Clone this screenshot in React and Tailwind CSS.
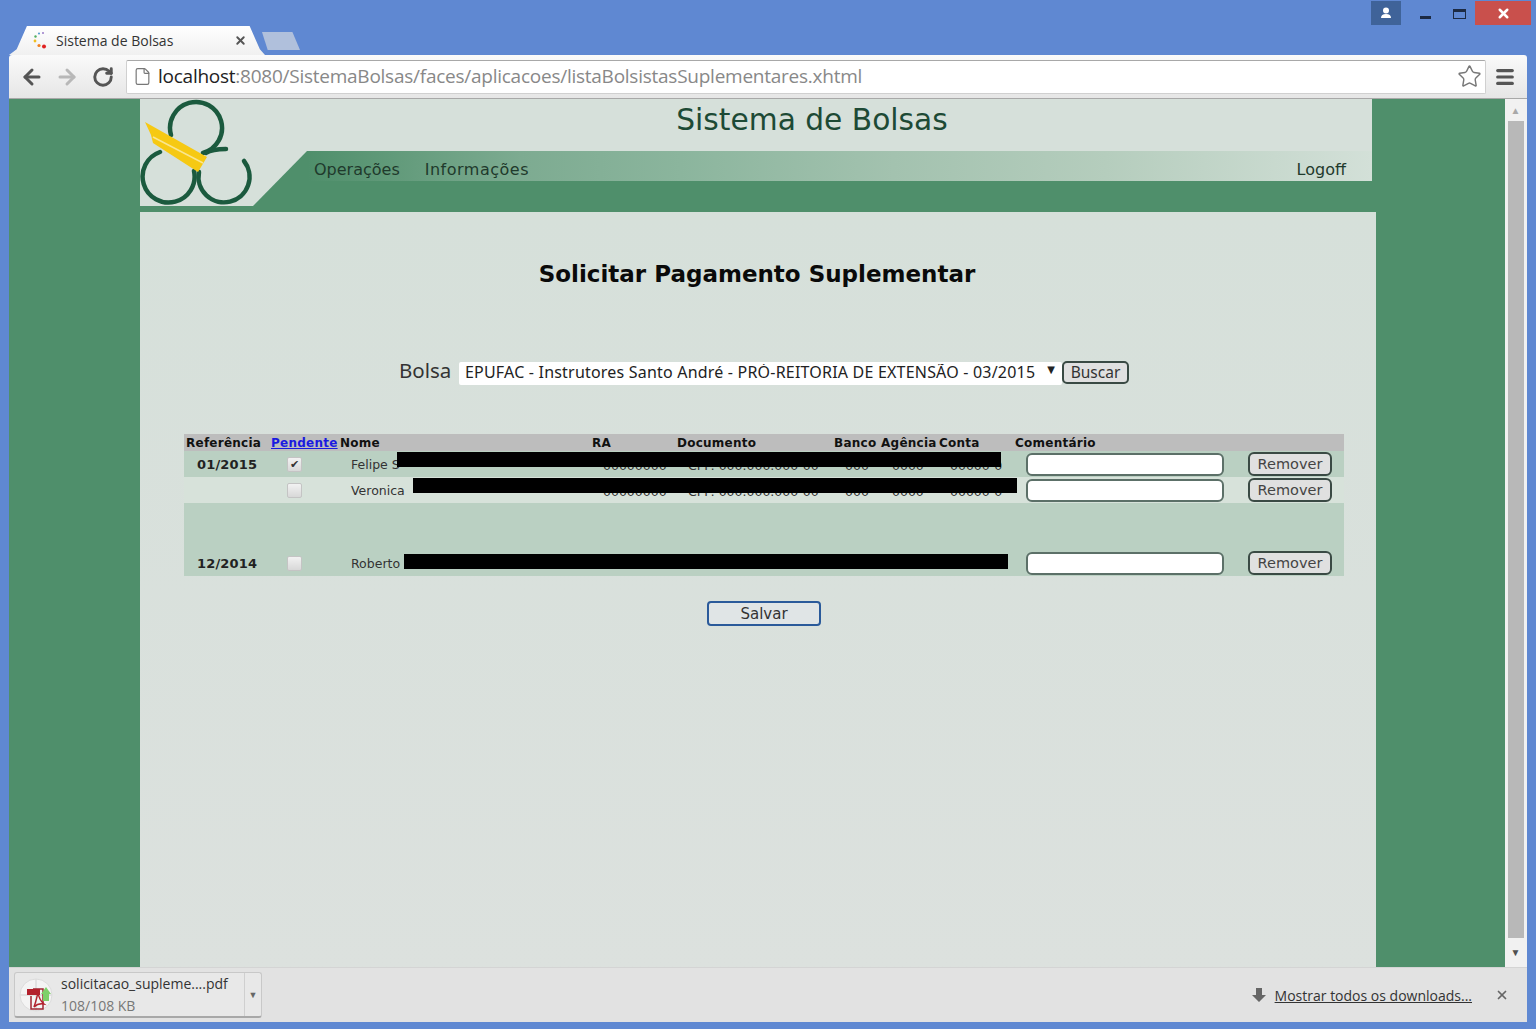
import React from "react";
import { ArrowLeft, ArrowRight, RotateCw, File, Star, Menu, X } from "lucide-react";

const rows = [
	{ ref: "01/2015", name: "Felipe S", checked: true, bg: "bg-[#bad0c2]", h: "h-[26px]" },
	{ ref: "", name: "Veronica", checked: false, bg: "bg-[#d7e2da]", h: "h-[26px]" },
	{ ref: "12/2014", name: "Roberto", checked: false, bg: "bg-[#bad0c2]", h: "h-[73px]" },
];

const Logo = () => (
	<svg width="168" height="107" viewBox="0 0 168 107" className="block">
		<polygon points="167,52 168,52 168,107 113,107" fill="#4f8f6b" />
		<g fill="none" stroke="#1b5a3e" strokeWidth="4.5" strokeLinecap="round">
			<path d="M31 36 A 26 26 0 1 1 63 54" />
			<path d="M66 54 Q 72 50 86 50" />
			<path d="M20 53 A 26 26 0 1 0 54 72" />
			<path d="M104 62 A 25.5 25.5 0 1 1 59 73" />
		</g>
		<polygon points="5,23 67,58 58,73 13,44 11,36" fill="#f6c913" />
		<line x1="13" y1="38" x2="63" y2="64" stroke="#f9e690" strokeWidth="1.5" />
	</svg>
);

const PdfIcon = () => (
	<svg width="34" height="34" viewBox="0 0 34 34">
		<circle cx="17" cy="17" r="16" fill="#f4f4f4" stroke="#dcdcdc" />
		<path d="M17 1v32M1 17h32" stroke="#dcdcdc" strokeWidth="1.5" />
		<path d="M14 11h10v20H12V18" fill="none" stroke="#a02430" strokeWidth="1.5" />
		<rect x="8" y="11" width="13" height="6" fill="#b3202c" />
		<path d="M15 29q3-9 4-15q1 8 6 12q-6-1-10 3z" fill="none" stroke="#b3202c" strokeWidth="1.5" />
		<path d="M27 9l5 7h-2v7h-6v-7h-2z" fill="#7ed06a" />
	</svg>
);

const App = () => {
	return (
		<div className="w-[1536px] h-[1029px] flex flex-col overflow-hidden bg-[#5f88d2] px-[9px] pb-[7px] font-['Open_Sans',sans-serif]">
			{/* Tab strip */}
			<div className="h-[55px] shrink-0 relative flex items-end">
				<div className="w-[256px] h-[29px] bg-gradient-to-b from-white to-[#f0f0f0] [clip-path:polygon(0_100%,3%_80%,7%_0,94%_0,98%_80%,100%_100%)] flex items-center pl-[24px] pb-[1px]">
					<svg width="16" height="18" viewBox="0 0 16 18" className="shrink-0">
						<circle cx="10" cy="2" r="1" fill="#9a7bc8" />
						<circle cx="6" cy="2.5" r="1.1" fill="#5aa0d0" />
						<circle cx="2.5" cy="5.5" r="1.2" fill="#50b060" />
						<circle cx="2" cy="10" r="1.4" fill="#f0c020" />
						<circle cx="6" cy="14.5" r="1.6" fill="#f08020" />
						<circle cx="11" cy="15.5" r="2" fill="#e02020" />
					</svg>
					<span className="ml-[7px] text-[14px] text-[#333] w-[178px] whitespace-nowrap">Sistema de Bolsas</span>
					<X size={13} strokeWidth={3.5} className="text-[#555]" />
				</div>
				<div className="w-[38px] h-[18px] mb-[5px] ml-[-3px] bg-[#b0c0dc] [clip-path:polygon(0_0,80%_0,100%_100%,15%_100%)]"></div>

				{/* Window controls */}
				<div className="absolute right-[-4px] top-[1px] h-[24px] flex items-start text-white">
					<div className="w-[30px] h-[24px] bg-[#3f6399] flex items-center justify-center">
						<svg width="12" height="12" viewBox="0 0 12 12" fill="white">
							<circle cx="6" cy="3.5" r="3" />
							<path d="M1 11q0-4 5-4t5 4z" />
						</svg>
					</div>
					<div className="w-[19px]"></div>
					<div className="w-[11px] h-[3px] mt-[15px] bg-[#1c2a44]"></div>
					<div className="w-[22px]"></div>
					<div className="w-[13px] h-[10px] mt-[8px] border border-[#1c2a44] border-t-[3px]"></div>
					<div className="w-[9px]"></div>
					<div className="w-[56px] h-[24px] bg-[#c9504c] flex items-center justify-center">
						<X size={15} strokeWidth={4} />
					</div>
				</div>
			</div>

			{/* Toolbar */}
			<div className="h-[44px] shrink-0 rounded-t-[3px] bg-gradient-to-b from-[#fafafa] to-[#e6e6e6] border-b border-[#a8a8a8] flex items-center">
				<ArrowLeft size={24} strokeWidth={3} className="ml-[11px] text-[#555]" />
				<ArrowRight size={24} strokeWidth={3} className="ml-[11px] text-[#b8b8b8]" />
				<RotateCw size={22} strokeWidth={3.2} className="ml-[13px] text-[#555]" />
				<div className="ml-[12px] w-[1360px] h-[34px] bg-white rounded-[2px] border border-[#d0d0d0] border-t-[#a8a8a8] flex items-center pl-[6px] pr-[3px]">
					<File size={19} strokeWidth={1.5} className="text-[#777] shrink-0" />
					<span className="ml-[6px] text-[19px] tracking-[-0.25px] text-[#222] whitespace-nowrap">
						localhost<span className="text-[#888]">:8080/SistemaBolsas/faces/aplicacoes/listaBolsistasSuplementares.xhtml</span>
					</span>
					<Star size={25} strokeWidth={1.4} className="ml-auto text-[#777]" />
				</div>
				<Menu size={22} strokeWidth={3.4} className="ml-[8px] text-[#555]" />
			</div>

			{/* Viewport */}
			<div className="flex-1 flex min-h-0">
				<div className="flex-1 bg-[#4f8f6b] pl-[131px] flex flex-col min-w-0">
					{/* Site header */}
					<div className="w-[1232px] h-[113px] shrink-0 flex items-start font-['DejaVu_Sans',sans-serif]">
						<div className="w-[168px] h-[107px] bg-[#d6e0da]">
							<Logo />
						</div>
						<div className="flex-1 h-[82px] bg-[#d6e0da] flex flex-col">
							<h1 className="h-[52px] pr-[56px] text-center text-[29.7px] leading-[41px] text-[#1d4a35]">Sistema de Bolsas</h1>
							<div className="h-[30px] flex items-center pt-[8px] pl-[6px] pr-[26px] text-[16px] text-[#1f3a2c] bg-[linear-gradient(90deg,#4f8f6b_0%,#7dab91_20%,#8bb59d_35%,#a3c2af_55%,#b5cdbd_75%,#d3e0d8_100%)]">
								<span>Operações</span>
								<span className="ml-[25px] tracking-[0.5px]">Informações</span>
								<span className="ml-auto">Logoff</span>
							</div>
						</div>
					</div>

					{/* Main panel */}
					<div className="w-[1236px] flex-1 bg-gradient-to-b from-[#d6e0da] to-[#dce1de] flex flex-col font-['DejaVu_Sans',sans-serif]">
						<h2 className="pt-[46px] pr-[2px] text-center text-[23px] leading-[32px] font-bold text-[#0a0a0a]">Solicitar Pagamento Suplementar</h2>

						<div className="mt-[71px] ml-[259px] flex items-center h-[23px]">
							<span className="w-[60px] text-[20.5px] text-[#333] font-['Noto_Sans',sans-serif] leading-none mb-[5px]">Bolsa</span>
							<div className="relative w-[603px] h-[23px]">
								<select className="appearance-none w-full h-full bg-white pl-[6px] pb-[2px] text-[16px] leading-none tracking-[0.2px] text-[#222] font-['Noto_Sans',sans-serif] rounded-[2px] outline-none">
									<option>EPUFAC - Instrutores Santo André - PRÓ-REITORIA DE EXTENSÃO - 03/2015</option>
								</select>
								<span className="absolute right-[7px] top-[1px] text-[10px] text-[#222]">▼</span>
							</div>
							<button className="w-[67px] h-[23px] bg-[#e0e0e0] border-2 border-[#3a4a44] rounded-[5px] text-[15.5px] leading-none text-[#333] font-['Noto_Sans',sans-serif]">Buscar</button>
						</div>

						<div className="relative mt-[50px] ml-[44px] w-[1160px]">
							<table className="table-fixed w-[1160px] border-collapse text-[12.5px] leading-[14px] text-[#333]">
								<colgroup>
									<col className="w-[85px]" />
									<col className="w-[69px]" />
									<col className="w-[252px]" />
									<col className="w-[85px]" />
									<col className="w-[157px]" />
									<col className="w-[48px]" />
									<col className="w-[58px]" />
									<col className="w-[75px]" />
									<col className="w-[222px]" />
									<col className="w-[109px]" />
								</colgroup>
								<thead>
									<tr className="h-[17px] bg-[#bdbdbd] text-left text-[12px] tracking-[0.25px] text-[#111] font-bold">
										<th className="pl-[2px] font-bold">Referência</th>
										<th className="pl-[2px] font-bold"><a href="#pendente" className="text-[#1a1ae0] underline">Pendente</a></th>
										<th className="pl-[2px] font-bold">Nome</th>
										<th className="pl-[2px] font-bold">RA</th>
										<th className="pl-[2px] font-bold">Documento</th>
										<th className="pl-[2px] font-bold">Banco</th>
										<th className="pl-[1px] font-bold">Agência</th>
										<th className="pl-[1px] font-bold">Conta</th>
										<th className="pl-[2px] font-bold">Comentário</th>
										<th></th>
									</tr>
								</thead>
								<tbody>
									{rows.map((r, i) => (
										<tr key={i} className={`${r.bg} ${r.h}`}>
											<td className="pl-[13px] align-bottom pb-[5px] font-bold text-[13px] tracking-[0.15px] text-[#222]">{r.ref}</td>
											<td className="pl-[18px] align-bottom pb-[5px]">
												<span className="w-[15px] h-[15px] rounded-[2px] border border-[#c4c4c4] bg-gradient-to-b from-[#f2f2f2] to-[#d8d8d8] flex items-center justify-center text-[11px] leading-none text-[#333]">
													{r.checked ? "✔" : ""}
												</span>
											</td>
											<td className="pl-[13px] align-bottom pb-[5px] whitespace-nowrap overflow-hidden">{r.name}</td>
											<td className="pl-[13px] align-bottom pb-[4px]">00000000</td>
											<td className="pl-[13px] align-bottom pb-[4px] whitespace-nowrap">CPF: 000.000.000-00</td>
											<td className="pl-[13px] align-bottom pb-[4px]">000</td>
											<td className="pl-[12px] align-bottom pb-[4px]">0000</td>
											<td className="pl-[12px] align-bottom pb-[4px]">00000-0</td>
											<td className="pl-[13px] align-bottom pb-[1px]">
												<input type="text" className="block w-[198px] h-[23px] bg-white border-2 border-[#5c7068] rounded-[6px] outline-none" />
											</td>
											<td className="pl-[13px] align-bottom pb-[1px]">
												<button className="block w-[84px] h-[24px] bg-[#e0e0e0] border-2 border-[#3a4a44] rounded-[6px] text-[14.5px] leading-none text-[#444]">Remover</button>
											</td>
										</tr>
									))}
								</tbody>
							</table>
							{/* redaction bars */}
							<div className="absolute left-[213px] top-[18px] w-[604px] h-[15px] bg-black"></div>
							<div className="absolute left-[229px] top-[44px] w-[604px] h-[15px] bg-black"></div>
							<div className="absolute left-[220px] top-[120px] w-[604px] h-[15px] bg-black"></div>
						</div>

						<button className="mt-[25px] ml-[567px] w-[114px] h-[25px] pt-[1px] bg-[#e0e5e6] border-2 border-[#2a5a9a] rounded-[4px] text-[15px] leading-none text-[#333]">Salvar</button>
					</div>
				</div>

				{/* Scrollbar */}
				<div className="w-[22px] shrink-0 bg-[#f1f1f1] pr-[1px] flex flex-col items-center">
					<span className="h-[22px] flex items-center text-[10px] text-[#a8a8a8]">▲</span>
					<div className="w-[16px] flex-1 bg-[#b8b8b8]"></div>
					<span className="h-[29px] flex items-center text-[10px] text-[#505050]">▼</span>
				</div>
			</div>

			{/* Downloads bar */}
			<div className="h-[55px] shrink-0 bg-[#e2e2e2] border-t border-[#d4d4d4] flex items-center pl-[5px] pr-[18px]">
				<div className="w-[248px] h-[46px] bg-[#e8e8e8] border border-[#c8c8c8] border-b-2 border-b-[#a8a8a8] rounded-[3px] flex items-center">
					<div className="ml-[4px] w-[34px] shrink-0"><PdfIcon /></div>
					<div className="ml-[8px] w-[184px] flex flex-col text-[14px] leading-[22px]">
						<span className="text-[#333]">solicitacao_supleme....pdf</span>
						<span className="text-[#777]">108/108 KB</span>
					</div>
					<div className="h-full w-[17px] border-l border-[#cfcfcf] flex items-center justify-center text-[9px] text-[#666]">▼</div>
				</div>
				<svg width="16" height="16" viewBox="0 0 16 16" className="ml-auto" fill="#666">
					<path d="M5 1h6v7h4l-7 7-7-7h4z" />
				</svg>
				<a href="#downloads" className="ml-[8px] text-[14px] text-[#333] underline">Mostrar todos os downloads...</a>
				<X size={14} strokeWidth={3} className="ml-[23px] text-[#666]" />
			</div>
		</div>
	);
};

export default App;
